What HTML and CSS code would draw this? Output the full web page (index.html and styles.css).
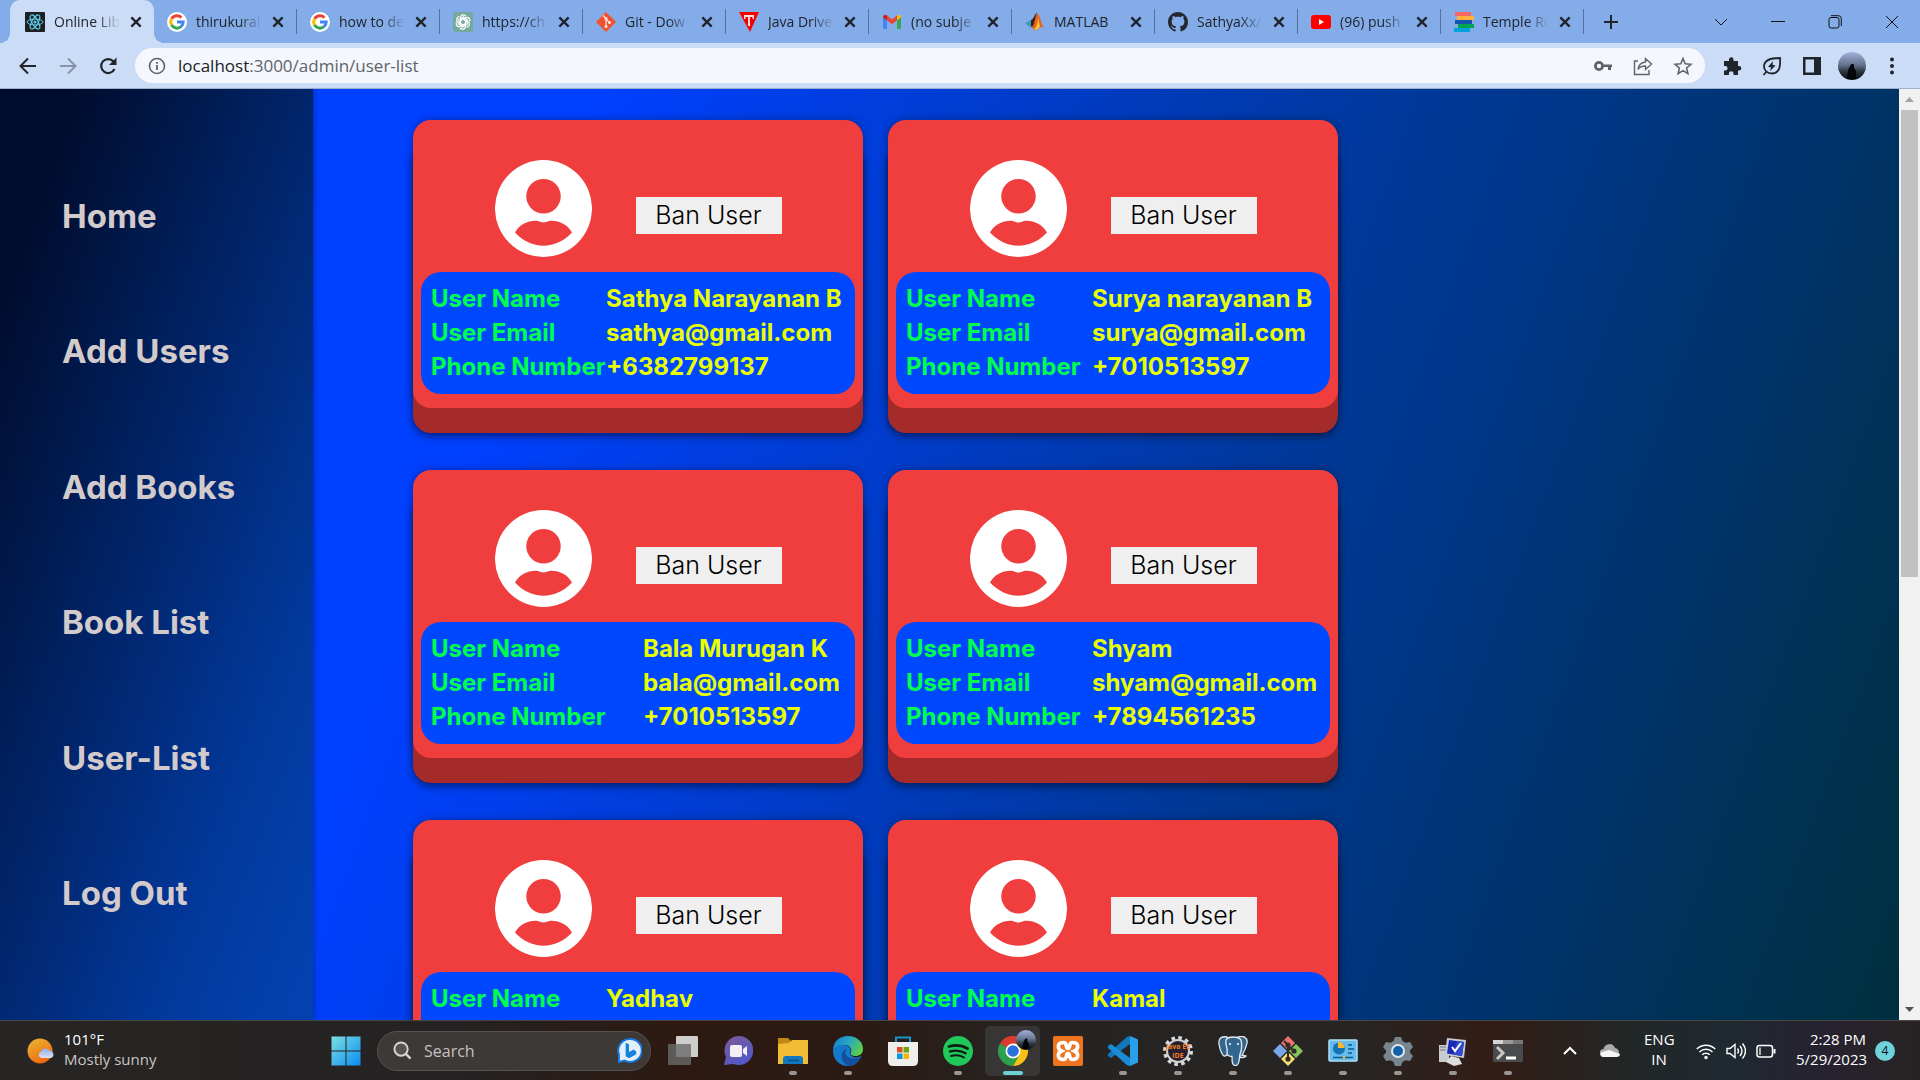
FILE: index.html
```
<!DOCTYPE html>
<html lang="en">
<head>
<meta charset="utf-8">
<title>Online Library</title>
<link rel="stylesheet" href="styles.css">
</head>
<body>
<svg class="defs" aria-hidden="true">
  <defs>
    <linearGradient id="g-win" x1="0" y1="0" x2="1" y2="1"><stop offset="0" stop-color="#7be0e2"/><stop offset="1" stop-color="#0a8cf0"/></linearGradient>
    <linearGradient id="g-sun" x1="0" y1="0" x2="0.5" y2="1"><stop offset="0" stop-color="#e8bb35"/><stop offset="1" stop-color="#f06a10"/></linearGradient>
    <linearGradient id="g-cloud" x1="0" y1="0" x2="0" y2="1"><stop offset="0" stop-color="#8fb0ea"/><stop offset="1" stop-color="#d8e2f4"/></linearGradient>
    <linearGradient id="g-photo" x1="0" y1="0" x2="0" y2="1"><stop offset="0" stop-color="#a4b0e0"/><stop offset="0.45" stop-color="#66758f"/><stop offset="0.7" stop-color="#2c343e"/><stop offset="1" stop-color="#0a0c12"/></linearGradient>
    <linearGradient id="g-chat" x1="0" y1="0" x2="0.6" y2="1"><stop offset="0" stop-color="#7d5a98"/><stop offset="1" stop-color="#5258c8"/></linearGradient>
    <linearGradient id="g-edge" x1="0" y1="0.2" x2="1" y2="0.6"><stop offset="0" stop-color="#1683d0"/><stop offset="0.5" stop-color="#28a8c0"/><stop offset="1" stop-color="#5cd044"/></linearGradient>
    <symbol id="i-close" viewBox="0 0 12 12"><path d="M2 2l8 8M10 2l-8 8" stroke="#20242b" stroke-width="2"/></symbol>
    <symbol id="i-google" viewBox="0 0 20 20"><circle cx="10" cy="10" r="10" fill="#fff"/><g fill="none" stroke-width="3"><path d="M4.600 6.800A6.200 6.200 0 0 1 14.400 5.600" stroke="#ea4335"/><path d="M4.700 13.200A6.200 6.200 0 0 1 4.700 6.700" stroke="#fbbc05"/><path d="M14 14.700A6.200 6.200 0 0 1 4.600 13" stroke="#34a853"/><path d="M10 10H16.200A6.200 6.200 0 0 1 13.900 14.800" stroke="#4285f4"/></g></symbol>
    <symbol id="i-user" viewBox="0 0 97 97"><path fill="#fff" fill-rule="evenodd" d="M48.500 0a48.500 48.500 0 1 1 0 97a48.500 48.500 0 1 1 0-97zM48.500 19a17.200 17.200 0 1 0 0 34.500a17.200 17.200 0 1 0 0-34.500zM20 72.500C25 64 34 60 43 61C46.500 62.900 50.500 62.900 54 61C63 60 72 64 77 72.500C69 81 59 85.700 48.500 85.700C38 85.700 28 81 20 72.500z"/></symbol>
    <symbol id="i-photo" viewBox="0 0 28 28"><circle cx="14" cy="14" r="14" fill="url(#g-photo)"/><path d="M9 27l1-9 2-4q2-4 4-1l0 3 2 3v8z" fill="#05060c"/></symbol>
  </defs>
</svg>

<header class="browser">
  <div class="tabstrip">
    <nav class="tabs" aria-label="Tabs">
      <div class="tab tab-active"><svg class="favicon" viewBox="0 0 20 20"><rect width="20" height="20" rx="1" fill="#1d1f23"/><g fill="none" stroke="#5fd0ee" stroke-width="1"><ellipse cx="10" cy="10" rx="8" ry="3"/><ellipse cx="10" cy="10" rx="8" ry="3" transform="rotate(60 10 10)"/><ellipse cx="10" cy="10" rx="8" ry="3" transform="rotate(120 10 10)"/></g><circle cx="10" cy="10" r="1.500" fill="#5fd0ee"/></svg><span class="tab-title">Online Lib</span><button class="tab-close" aria-label="Close tab"><svg><use href="#i-close"/></svg></button></div>
      <div class="tab"><svg class="favicon"><use href="#i-google"/></svg><span class="tab-title">thirukural</span><button class="tab-close" aria-label="Close tab"><svg><use href="#i-close"/></svg></button></div>
      <div class="tab"><svg class="favicon"><use href="#i-google"/></svg><span class="tab-title">how to de</span><button class="tab-close" aria-label="Close tab"><svg><use href="#i-close"/></svg></button></div>
      <div class="tab"><svg class="favicon" viewBox="0 0 20 20"><rect width="20" height="20" rx="3" fill="#75a99c"/><g fill="none" stroke="#fff" stroke-width="1.200"><path id="petal" d="M7.500 10V5.500a3 3 0 0 1 5.500-1.300M7.500 8.500l4-2.300 3.800 2.200"/><use href="#petal" transform="rotate(60 10 10)"/><use href="#petal" transform="rotate(120 10 10)"/><use href="#petal" transform="rotate(180 10 10)"/><use href="#petal" transform="rotate(240 10 10)"/><use href="#petal" transform="rotate(300 10 10)"/></g></svg><span class="tab-title">https://ch</span><button class="tab-close" aria-label="Close tab"><svg><use href="#i-close"/></svg></button></div>
      <div class="tab"><svg class="favicon" viewBox="0 0 20 20"><path d="M10 0l10 10-10 10L0 10z" fill="#f4502f"/><path d="M7 3.500l3 3V14.500M10 7l3.500 3.500" stroke="#fbe4dc" stroke-width="1.300" fill="none"/><g fill="#fbe4dc"><circle cx="10" cy="6.500" r="1.500"/><circle cx="10" cy="14.500" r="1.500"/><circle cx="13.500" cy="10.500" r="1.500"/></g></svg><span class="tab-title">Git - Dow</span><button class="tab-close" aria-label="Close tab"><svg><use href="#i-close"/></svg></button></div>
      <div class="tab"><svg class="favicon" viewBox="0 0 20 20"><path d="M0 0h20l-9 20z" fill="#f80000"/><path d="M5 3h10v4h-1.500V5H11v9H9V5H6.500v2H5z" fill="#fcdada"/></svg><span class="tab-title">Java Drive</span><button class="tab-close" aria-label="Close tab"><svg><use href="#i-close"/></svg></button></div>
      <div class="tab"><svg class="favicon" viewBox="0 0 20 20"><path d="M1 5v12h4V8z" fill="#4285f4"/><path d="M19 5v12h-4V8z" fill="#34a853"/><path d="M1 5.500C1 2.800 4 2.500 5 3.500l5 4 5-4v4.700l-5 4-5-4z" fill="#ea4335"/><path d="M1 5.500C1 3 3.500 2.500 5 3.500v4.700l-4-3z" fill="#c5221f"/><path d="M19 5.500C19 3 16.500 2.500 15 3.500v4.700l4-3z" fill="#fbbc04"/></svg><span class="tab-title">(no subje</span><button class="tab-close" aria-label="Close tab"><svg><use href="#i-close"/></svg></button></div>
      <div class="tab"><svg class="favicon" viewBox="0 0 20 20"><path d="M0 11l6-3 3 5-3 3z" fill="#3f9db8"/><path d="M6 8c3-1 4-7 6-7l-3 15-3-2z" fill="#3a2024"/><path d="M12 1c3 2 4 11 7 15-4-3-6 1-9 3l-3-4C10 12 10 4 12 1z" fill="#e8601c"/><path d="M12.500 3c1 4 0 11-3 14l1 1.500c2-2 4-3 4.500-4z" fill="#fbc63a"/></svg><span class="tab-title tab-title-short">MATLAB</span><button class="tab-close" aria-label="Close tab"><svg><use href="#i-close"/></svg></button></div>
      <div class="tab"><svg class="favicon" viewBox="0 0 16 16"><path fill="#24292f" d="M8 0C3.580 0 0 3.580 0 8c0 3.540 2.290 6.530 5.470 7.590.4.070.550-.170.550-.380 0-.190-.010-.820-.010-1.490-2.010.370-2.530-.490-2.690-.940-.090-.230-.480-.940-.820-1.130-.280-.150-.680-.520-.010-.530.630-.010 1.080.580 1.230.820.720 1.210 1.870.870 2.330.660.070-.520.280-.870.510-1.070-1.780-.2-3.640-.890-3.640-3.950 0-.870.310-1.590.820-2.150-.080-.2-.360-1.020.080-2.120 0 0 .670-.210 2.200.820.640-.180 1.320-.270 2-.270s1.360.090 2 .270c1.530-1.040 2.200-.820 2.200-.820.440 1.100.160 1.920.080 2.120.510.560.820 1.270.820 2.150 0 3.070-1.870 3.750-3.650 3.950.290.250.540.730.540 1.480 0 1.070-.010 1.930-.010 2.200 0 .210.150.460.550.380A8.010 8.010 0 0 0 16 8c0-4.420-3.580-8-8-8z"/></svg><span class="tab-title">SathyaXx/</span><button class="tab-close" aria-label="Close tab"><svg><use href="#i-close"/></svg></button></div>
      <div class="tab"><svg class="favicon" viewBox="0 0 20 20"><rect y="3" width="20" height="14" rx="3" fill="#f00"/><path d="M8 7l5 3-5 3z" fill="#fff"/></svg><span class="tab-title">(96) push</span><button class="tab-close" aria-label="Close tab"><svg><use href="#i-close"/></svg></button></div>
      <div class="tab"><svg class="favicon" viewBox="0 0 20 20"><path d="M1 0h16v4H1z" fill="#f96464"/><path d="M3 4h17v4H3z" fill="#fbb13c"/><path d="M1 8h17v4H1z" fill="#1555b0"/><path d="M4 12h16v4H4z" fill="#00a651"/><path d="M0 16h16v4H0z" fill="#00a3dc"/></svg><span class="tab-title">Temple Ru</span><button class="tab-close" aria-label="Close tab"><svg><use href="#i-close"/></svg></button></div>
    </nav>
    <button class="new-tab" aria-label="New tab"><svg viewBox="0 0 16 16"><path d="M8 1v14M1 8h14" stroke="#20242b" stroke-width="2"/></svg></button>
    <div class="window-controls">
      <button aria-label="Search tabs"><svg viewBox="0 0 14 14"><path d="M1 4l6 6 6-6"/></svg></button>
      <button aria-label="Minimize"><svg viewBox="0 0 14 14"><path d="M0 6.500h14"/></svg></button>
      <button aria-label="Restore"><svg viewBox="0 0 14 14"><rect x="1" y="2.500" width="10" height="10.500" rx="2"/><path d="M3 .7h7.500q2.800 0 2.800 2.800V11"/></svg></button>
      <button aria-label="Close"><svg viewBox="0 0 14 14"><path d="M1 1l12 12M13 1L1 13"/></svg></button>
    </div>
  </div>
  <div class="toolbar">
    <button class="tool" aria-label="Back"><svg viewBox="0 0 20 20"><path d="M18 10H3M10 2.500L2.500 10l7.500 7.500" fill="none" stroke="#20242b" stroke-width="2"/></svg></button>
    <button class="tool" aria-label="Forward"><svg viewBox="0 0 20 20"><path d="M2 10h15M10 2.500l7.500 7.500-7.500 7.500" fill="none" stroke="#8a93a5" stroke-width="2"/></svg></button>
    <button class="tool" aria-label="Reload"><svg viewBox="0 0 20 20"><path d="M16.500 13A7 7 0 1 1 15.500 5.500" fill="none" stroke="#20242b" stroke-width="2.200"/><path d="M18.500 1.500V9H11z" fill="#20242b"/></svg></button>
    <div class="omnibox">
      <svg class="tool-icon" viewBox="0 0 20 20"><circle cx="10" cy="10" r="7.500" fill="none" stroke="#5f6368" stroke-width="1.600"/><path d="M10 9v5M10 6v1.800" stroke="#5f6368" stroke-width="1.800"/></svg>
      <a class="url" href="#top"><span>localhost</span>:3000/admin/user-list</a>
      <button class="omni-btn" aria-label="Passwords"><svg viewBox="0 0 20 20"><circle cx="6" cy="10" r="3.600" fill="none" stroke="#5f6368" stroke-width="2.800"/><path d="M10 8.500h9V11h-1v3h-3v-3h-5z" fill="#5f6368"/></svg></button>
      <button class="omni-btn" aria-label="Share"><svg viewBox="0 0 20 20"><g fill="none" stroke="#5f6368" stroke-width="1.400"><path d="M5 5H1.500v13.500H16V14"/><path d="M5 13.500C5.500 9 8 6.500 12.500 6V2.500L18.500 8l-6 5.500V10C9 10 6.500 11 5 13.500z"/></g></svg></button>
      <button class="omni-btn" aria-label="Bookmark"><svg viewBox="0 0 20 20"><path d="M10 2.500l2.200 5.300 5.700.5-4.300 3.700 1.300 5.600L10 14.600l-4.900 3 1.300-5.600L2.100 8.300l5.700-.5z" fill="none" stroke="#5f6368" stroke-width="1.600"/></svg></button>
    </div>
    <button class="tool" aria-label="Extensions"><svg viewBox="0 0 20 20"><path d="M2 5h5V3.500a2.200 2.200 0 0 1 4.500 0V5H16v5h1a2.300 2.300 0 0 1 0 4.600h-1V19h-4.500v-1.500a2.300 2.300 0 0 0-4.600 0V19H2v-4.500h1.300a2.300 2.300 0 0 0 0-4.600H2z" fill="#20242b"/></svg></button>
    <button class="tool" aria-label="Energy saver"><svg viewBox="0 0 20 20"><path d="M18 2c.5 8 0 15-8 15.500C5 17.500 2 14 2 10.500 2 4 8 2 18 2zM5 15l-3.500 4" fill="none" stroke="#20242b" stroke-width="1.800"/><path d="M11 5l-5 6 3 .3L8 15l5.500-5.500-3-.7z" fill="#20242b"/></svg></button>
    <button class="tool" aria-label="Side panel"><svg viewBox="0 0 20 20"><path d="M1 1h18v18H1zM3.500 3.500v13H12v-13z" fill="#20242b" fill-rule="evenodd"/></svg></button>
    <button class="tool" aria-label="Profile"><svg class="profile"><use href="#i-photo"/></svg></button>
    <button class="tool" aria-label="Menu"><svg viewBox="0 0 20 20"><g fill="#20242b"><circle cx="10" cy="3.500" r="2"/><circle cx="10" cy="10" r="2"/><circle cx="10" cy="16.500" r="2"/></g></svg></button>
  </div>
</header>

<div class="viewport" id="top">
  <nav class="sidebar">
    <a href="#home">Home</a>
    <a href="#add-users">Add Users</a>
    <a href="#add-books">Add Books</a>
    <a href="#book-list">Book List</a>
    <a href="#user-list">User-List</a>
    <a href="#logout">Log Out</a>
  </nav>
  <main class="content">
    <div class="cards">
      <article class="card">
        <div class="card-head"><svg class="avatar"><use href="#i-user"/></svg><button class="ban">Ban User</button></div>
        <table class="details values-lg"><tr><th>User Name</th><td>Sathya Narayanan B</td></tr><tr><th>User Email</th><td>sathya@gmail.com</td></tr><tr><th>Phone Number</th><td>+6382799137</td></tr></table>
      </article>
      <article class="card">
        <div class="card-head"><svg class="avatar"><use href="#i-user"/></svg><button class="ban">Ban User</button></div>
        <table class="details"><tr><th>User Name</th><td>Surya narayanan B</td></tr><tr><th>User Email</th><td>surya@gmail.com</td></tr><tr><th>Phone Number</th><td>+7010513597</td></tr></table>
      </article>
      <article class="card">
        <div class="card-head"><svg class="avatar"><use href="#i-user"/></svg><button class="ban">Ban User</button></div>
        <table class="details values-sm"><tr><th>User Name</th><td>Bala Murugan K</td></tr><tr><th>User Email</th><td>bala@gmail.com</td></tr><tr><th>Phone Number</th><td>+7010513597</td></tr></table>
      </article>
      <article class="card">
        <div class="card-head"><svg class="avatar"><use href="#i-user"/></svg><button class="ban">Ban User</button></div>
        <table class="details"><tr><th>User Name</th><td>Shyam</td></tr><tr><th>User Email</th><td>shyam@gmail.com</td></tr><tr><th>Phone Number</th><td>+7894561235</td></tr></table>
      </article>
      <article class="card">
        <div class="card-head"><svg class="avatar"><use href="#i-user"/></svg><button class="ban">Ban User</button></div>
        <table class="details values-lg"><tr><th>User Name</th><td>Yadhav</td></tr><tr><th>User Email</th><td>yadhav@gmail.com</td></tr><tr><th>Phone Number</th><td>+7010513597</td></tr></table>
      </article>
      <article class="card">
        <div class="card-head"><svg class="avatar"><use href="#i-user"/></svg><button class="ban">Ban User</button></div>
        <table class="details"><tr><th>User Name</th><td>Kamal</td></tr><tr><th>User Email</th><td>kamal@gmail.com</td></tr><tr><th>Phone Number</th><td>+7010513597</td></tr></table>
      </article>
    </div>
  </main>
  <div class="scrollbar" aria-hidden="true">
    <svg viewBox="0 0 21 21"><path d="M6 13l4.500-5 4.500 5z" fill="#a3a3a3"/></svg>
    <div class="track"><div class="thumb"></div></div>
    <svg viewBox="0 0 21 21"><path d="M6 8l4.500 5L15 8z" fill="#505050"/></svg>
  </div>
</div>

<footer class="taskbar">
  <div class="weather">
    <svg viewBox="0 0 28 28"><circle cx="13" cy="14" r="12.500" fill="url(#g-sun)"/><path d="M14 21a3.500 3.500 0 0 1 0-6.500 5 5 0 0 1 9-.5 3.600 3.600 0 0 1 1 7z" fill="url(#g-cloud)"/></svg>
    <p><span>101°F</span><br>Mostly sunny</p>
  </div>
  <div class="apps">
    <button class="app" aria-label="Start"><svg viewBox="0 0 30 30"><path d="M.5 .5h14v14H.5zM15.500 .5h14v14h-14zM.5 15.500h14v14H.5zM15.500 15.500h14v14h-14z" fill="url(#g-win)"/></svg></button>
    <label class="search">
      <svg viewBox="0 0 20 20"><circle cx="8.500" cy="8.500" r="7" fill="#ffffff22" stroke="#d8d6d5" stroke-width="2"/><path d="M13.500 13.500l5 5" stroke="#d8d6d5" stroke-width="2.400"/></svg>
      <input type="text" placeholder="Search" aria-label="Search">
      <svg class="bing" viewBox="0 0 26 26"><path d="M13 1a12 12 0 1 1-5 22.500L2 25V17A12 12 0 0 1 13 1z" fill="#e4effc" stroke="#1878e0" stroke-width="2"/><path d="M9 5l3.500 1.500v8l5-2.500 2.500 2v3L12.500 21 9 19z" fill="#1483dc"/></svg>
    </label>
    <button class="app" aria-label="Task view"><svg viewBox="0 0 30 30"><rect x="8" y="0" width="22" height="21" rx="1" fill="#cfcecd"/><rect x="0" y="8" width="23" height="21" rx="1" fill="#6a6a6acc"/></svg></button>
    <button class="app" aria-label="Chat"><svg viewBox="0 0 30 30"><path d="M15.500 0a14.500 14.500 0 1 1-5 28L1 29l2-8A14.500 14.500 0 0 1 15.500 0z" fill="url(#g-chat)"/><rect x="7" y="9" width="12" height="12" rx="2" fill="#f2f0f5"/><path d="M20 13l4-3v10l-4-3z" fill="#f2f0f5"/></svg></button>
    <button class="app running" aria-label="File Explorer"><svg viewBox="0 0 30 30"><path d="M0 2h10l3 3h17v5H0z" fill="#c08a10"/><path d="M0 8l11-1 3-3h16v24H0z" fill="#f0bd35"/><path d="M5 28v-5q0-3 3-3h14q3 0 3 3v5z" fill="#1078bc"/><path d="M10 24.500h11" stroke="#084f84" stroke-width="1.500"/></svg></button>
    <button class="app running" aria-label="Edge"><svg viewBox="0 0 30 30"><path d="M0 15C0 5 7 0 15 0c9 0 15 6 15 13 0 5-4 7-7 7-4 0-6-1-5-4 1-4-2-7-6-7C6 9 2 11 0 15z" fill="url(#g-edge)"/><path d="M0 15C2 10 6 8.500 11 9c4 0 7 3 6.500 6-.8 3 0 5 3 6 4 1 7-1 8-1-3 7-9 10-14 10C6 30 0 23 0 15z" fill="#1479ca"/><path d="M11 14c-5 5-2 14 5 16 6 0 10-4 12.500-10-6 4-15 3-16-3-.2-2 0-3 1-4-1 0-2 .500-2.500 1z" fill="#1550a0"/></svg></button>
    <button class="app" aria-label="Store"><svg viewBox="0 0 30 30"><path d="M8 7V1.500h14V7" fill="none" stroke="#1893cc" stroke-width="2"/><path d="M0 6h30v19q0 5-5 5H5q-5 0-5-5z" fill="#eeeeed"/><path d="M9 11h5.500v5.500H9z" fill="#e04c24"/><path d="M15.500 11H21v5.500h-5.500z" fill="#68a80c"/><path d="M9 17.500h5.500V23H9z" fill="#0a98dc"/><path d="M15.500 17.500H21V23h-5.500z" fill="#f4b40c"/></svg></button>
    <button class="app running" aria-label="Spotify"><svg viewBox="0 0 30 30"><circle cx="15" cy="15" r="15" fill="#1ec95a"/><g fill="none" stroke="#101b14" stroke-linecap="round"><path d="M6 10.500q10-3 18.500 2" stroke-width="2.800"/><path d="M7 15.500q8.500-2.500 15.500 1.800" stroke-width="2.400"/><path d="M8 20q7-2 13 1.500" stroke-width="2"/></g></svg></button>
    <button class="app running focused" aria-label="Chrome"><svg viewBox="0 0 30 30"><path d="M15 15L2 7.500A15 15 0 0 1 28 7.500H15z" fill="#dc3a30"/><path d="M15 15L2 7.500A15 15 0 0 0 15 30l6.500-11.200z" fill="#2ca04c"/><path d="M15 7.500h13A15 15 0 0 1 15 30l6.500-11.200z" fill="#fbc116"/><circle cx="15" cy="15" r="7.500" fill="#fff"/><circle cx="15" cy="15" r="5.800" fill="#2a70dc"/></svg><svg class="app-profile" viewBox="0 0 28 28"><use href="#i-photo"/></svg></button>
    <button class="app" aria-label="XAMPP"><svg viewBox="0 0 30 30"><rect width="30" height="30" rx="2" fill="#ee7420"/><path d="M10.500 6.500C4 6.500 4 13 8.500 15C4 17 4 23.500 10.500 23.500C15 23.500 12 17.500 15 17.500S15 23.500 19.500 23.500C26 23.500 26 17 21.500 15C26 13 26 6.500 19.500 6.500C15 6.500 18 12.500 15 12.500S15 6.500 10.500 6.500z" fill="none" stroke="#fff" stroke-width="3.600"/></svg></button>
    <button class="app running" aria-label="Visual Studio Code"><svg viewBox="0 0 30 30"><path d="M22 0l8 3.500v23L22 30z" fill="#28a0ea"/><path d="M22 0v8L3 22l-3-2v-2L19 .800z" fill="#1278bc"/><path d="M22 30v-8L3 8l-3 2v2l19 17.200z" fill="#1b8bd4"/></svg></button>
    <button class="app running" aria-label="Eclipse"><svg viewBox="0 0 30 30"><circle cx="15" cy="15" r="13" fill="none" stroke="#d8d8d8" stroke-width="4" stroke-dasharray="3.500 3.300"/><circle cx="15" cy="15" r="11" fill="#282030" stroke="#d0d0d0" stroke-width="2"/><text x="15" y="13" class="ee">Java EE</text><text x="15" y="22" class="ee">IDE</text></svg></button>
    <button class="app running" aria-label="PostgreSQL"><svg viewBox="0 0 30 30"><g fill="#33668f" stroke="#e4eaf0" stroke-width="1.300"><path d="M9 1C4 0 0 2 1 8c1 7 4 13 6 12 2 0 3-3 4-4z"/><path d="M20 1c5-2 10 1 9 6-1 6-3 9-5 12l4 1c-2 2-5 2-6 1z"/><path d="M8 4c2-4 12-4 15 0 1 5 1 10-1 14-1 4 0 11-4 11.500-4 .500-4-4-4-9-3 0-5-1-5-4 1-5-2-7-1-12.500z"/></g><circle cx="12" cy="8" r="1" fill="#fff"/><circle cx="20" cy="8" r="1" fill="#fff"/></svg></button>
    <button class="app running" aria-label="Git Bash"><svg viewBox="0 0 30 30"><path d="M15 0l7 7-7 7-7-7z" fill="#ec7468"/><path d="M7 8l7 7-7 7-7-7z" fill="#78a8ec"/><path d="M23 8l7 7-7 7-7-7z" fill="#84c45c"/><path d="M15 16l7 7-7 7-7-7z" fill="#f4dc70"/><path d="M11 5l4 4v14M15 10l6 5" stroke="#302c2a" stroke-width="2" fill="none"/><g fill="#302c2a"><circle cx="15" cy="9" r="2.600"/><circle cx="15" cy="23" r="2.600"/><circle cx="21" cy="15" r="2.600"/></g></svg></button>
    <button class="app running" aria-label="Control Panel"><svg viewBox="0 0 30 30"><rect x="1" y="4" width="28" height="21" rx="1" fill="#65bbec" stroke="#b0e0f8" stroke-width="1.500"/><circle cx="11" cy="12.500" r="6" fill="#1574b4"/><path d="M10 12V5.500a6.500 6.500 0 0 1 6.500 6.500z" fill="#f8b830"/><path d="M20 9h4M20 13h6M20 17h4M5 21.500h20" stroke="#0c5c98" stroke-width="1.500"/><path d="M15 20h2v3h-2z" fill="#f8b830"/></svg></button>
    <button class="app running" aria-label="Settings"><svg viewBox="0 0 30 30"><path d="M12 1h6l1.500 4 3 1.800 4.500-.8 3 5-3 3.500v2l3 3.500-3 5-4.500-.8-3 1.800-1.500 4h-6l-1.500-4-3-1.800L3 25l-3-5 3-3.500v-2L0 11l3-5 4.500.800 3-1.800z" fill="#78848e"/><circle cx="15" cy="15" r="7" fill="#dce6ee"/><circle cx="15" cy="15" r="5" fill="#1460a8"/></svg></button>
    <button class="app running" aria-label="Remote Desktop"><svg viewBox="0 0 30 30"><path d="M1 9h10v17H1z" fill="#c8ccd0"/><path d="M2 11h7M2 14h7" stroke="#707478"/><path d="M13 20l8 2 3 6-8 2-8-4z" fill="#dcdee0"/><path d="M9 2l19 2-2 18-19-3z" fill="#c8ccd0"/><path d="M11 4l15 2-2 14-15-2.500z" fill="#1828b8"/><path d="M19 5l7 1-2 14-9-1.500z" fill="#3048cc"/><path d="M14 11l3 4 6-8" fill="none" stroke="#fff" stroke-width="2"/></svg></button>
    <button class="app running" aria-label="Terminal"><svg viewBox="0 0 30 30"><rect y="4" width="30" height="22" rx="1" fill="#4a4b4c"/><path d="M0 4h10v4H0z" fill="#d4d4d4"/><path d="M10 4h10v4H10z" fill="#999"/><path d="M20 4h10v4H20z" fill="#777"/><path d="M4 11l6 6-6 6" fill="none" stroke="#c8c8c8" stroke-width="3"/><path d="M13 22h10" stroke="#fff" stroke-width="3"/></svg></button>
  </div>
  <div class="tray">
    <button aria-label="Hidden icons"><svg viewBox="0 0 20 20"><path d="M4 13l6-6 6 6" fill="none" stroke="#fff" stroke-width="2"/></svg></button>
    <svg class="cloud" viewBox="0 0 20 20"><path d="M4 16a4 4 0 0 1-.5-8 6 6 0 0 1 11.500-1 4.800 4.800 0 0 1 1.500 9z" fill="#aaa"/><path d="M3 16c-3-1-3-4-1-5l7-2 11 4c0 2-1.500 3-3.500 3z" fill="#f4f4f4"/></svg>
    <p class="lang">ENG<br>IN</p>
    <button class="status" aria-label="Network, volume, battery">
      <svg viewBox="0 0 20 20"><g fill="none" stroke="#fff" stroke-width="1.500"><path d="M.8 8a13 13 0 0 1 18.400 0M3.500 11a9.200 9.200 0 0 1 13 0M6.200 13.800a5.400 5.400 0 0 1 7.600 0"/></g><circle cx="10" cy="16.500" r="1.700" fill="#fff"/></svg>
      <svg viewBox="0 0 20 20"><g fill="none" stroke="#fff" stroke-width="1.400"><path d="M1 7.500h3L9 3.500v13L4 12.500H1z"/><path d="M11.500 7.500q2 2.500 0 5M14 5q4 5 0 10M16.500 2.500q6 7.500 0 15"/></g></svg>
      <svg viewBox="0 0 20 20"><rect x="1" y="4.500" width="15.500" height="11.500" rx="2.500" fill="none" stroke="#fff" stroke-width="1.500"/><path d="M3 6.500h2v7.500H3z" fill="#aaa"/><path d="M17.500 8h2v4.500h-2z" fill="#fff"/></svg>
    </button>
    <p class="clock">2:28 PM<br>5/29/2023</p>
    <span class="badge">4</span>
  </div>
</footer>
</body>
</html>
```
FILE: styles.css
```
* {
  box-sizing: border-box;
}

body {
  margin: 0;
  height: 100vh;
  display: flex;
  flex-direction: column;
  overflow: hidden;
  font-family: "Open Sans", "Noto Sans", sans-serif;
}

button {
  border: 0;
  padding: 0;
  background: none;
  font: inherit;
  color: inherit;
}

svg {
  display: block;
  flex: none;
}

p {
  margin: 0;
}

.defs {
  position: absolute;
  width: 0;
  height: 0;
}

/* Browser frame */
.browser {
  background: #cbdcf6;
  border-bottom: 1px solid #9fb0cc;
}

.tabstrip {
  display: flex;
  align-items: center;
  height: 43px;
  padding-left: 13px;
  background: #84ace9;
}

.tabs {
  display: flex;
  flex: 0 1 1571px;
  min-width: 0;
  height: 43px;
  align-items: center;
}

.tab {
  display: flex;
  flex: 1 1 0;
  min-width: 0;
  align-items: center;
  height: 25px;
  padding: 0 11px 0 13px;
  gap: 9px;
  border-right: 1px solid #56709d;
}

.tab-active {
  position: relative;
  height: 43px;
  margin-left: -3px;
  padding-left: 15px;
  border-right: 0;
  background: #cbdcf6;
  border-radius: 10px 10px 0 0;
}

/* Curved feet where the active tab meets the toolbar */
.tab-active::before,
.tab-active::after {
  content: "";
  position: absolute;
  bottom: 0;
  width: 10px;
  height: 10px;
}

.tab-active::before {
  right: 100%;
  background: radial-gradient(circle at 0 0, transparent 10px, #cbdcf6 10px);
}

.tab-active::after {
  left: 100%;
  background: radial-gradient(circle at 100% 0, transparent 10px, #cbdcf6 10px);
}

.favicon {
  width: 20px;
  height: 20px;
}

.tab-title {
  flex: 1;
  min-width: 0;
  overflow: hidden;
  white-space: nowrap;
  font-size: 14px;
  line-height: 20px;
  color: #20242b;
  mask-image: linear-gradient(90deg, #000 65%, transparent);
}

.tab-title-short {
  mask-image: none;
}

.tab-close svg {
  width: 14px;
  height: 14px;
}

.new-tab {
  margin-left: 19px;
}

.new-tab svg {
  width: 16px;
  height: 16px;
}

.window-controls {
  display: flex;
  margin-left: auto;
  height: 36px;
}

.window-controls button {
  display: grid;
  place-items: center;
  width: 57px;
}

.window-controls svg {
  width: 14px;
  height: 14px;
  fill: none;
  stroke: #111;
}

.toolbar {
  display: flex;
  align-items: center;
  height: 45px;
  padding: 0 8px;
}

.tool {
  display: grid;
  place-items: center;
  width: 40px;
  height: 40px;
}

.tool svg {
  width: 20px;
  height: 20px;
}

.tool .profile {
  width: 28px;
  height: 28px;
}

.omnibox {
  display: flex;
  flex: 1;
  align-items: center;
  height: 35px;
  margin: 0 7px;
  padding: 0 12px;
  border-radius: 18px;
  background: #f4f7fd;
}

.tool-icon {
  width: 20px;
  height: 20px;
}

.url {
  flex: 1;
  margin-left: 11px;
  font-size: 17px;
  color: #5f6368;
  text-decoration: none;
}

.url span {
  color: #1b1d21;
}

.omni-btn {
  display: grid;
  place-items: center;
  width: 40px;
}

.omni-btn:last-child {
  width: 20px;
  margin-left: 10px;
}

.omni-btn svg {
  width: 20px;
  height: 20px;
}

/* Page */
.viewport {
  display: flex;
  flex: 1;
  min-height: 0;
  overflow: hidden;
  font-family: Inter, "Open Sans", sans-serif;
}

.sidebar {
  position: relative;
  z-index: 1;
  display: flex;
  flex-direction: column;
  flex: 0 0 313px;
  justify-content: space-between;
  padding: 103px 62px;
  background: linear-gradient(110deg, #000c2c 11%, #02389a 75%, #0341ae 95%);
  box-shadow: 0 0 6px #00000066;
}

.sidebar a {
  font-size: 33px;
  font-weight: 700;
  line-height: 48px;
  color: #d3cbcb;
  text-decoration: none;
  white-space: nowrap;
}

.content {
  flex: 1;
  min-width: 0;
  padding: 31px 100px;
  overflow: hidden;
  background: linear-gradient(110deg, #0040ff 15%, #0039a2 54%, #003474 75%, #003040 99%);
}

.cards {
  display: flex;
  flex-wrap: wrap;
  gap: 62px 25px;
  max-width: 925px;
}

.card {
  width: 450px;
  padding: 40px 8px 14px;
  border-radius: 18px;
  background: #f03e3e;
  box-shadow: 0 25px 0 #a52a2a, 0 28px 9px #00000088, 0 0 8px #00000055;
}

.card-head {
  display: flex;
  justify-content: center;
  align-items: flex-start;
  gap: 44px;
  height: 112px;
}

.avatar {
  width: 97px;
  height: 97px;
}

.ban {
  width: 146px;
  height: 37px;
  margin-top: 37px;
  background: #efefef;
  font-size: 25px;
  font-weight: 300;
  line-height: 37px;
  color: #000;
}

.details {
  width: 100%;
  padding: 10px;
  border-spacing: 0;
  border-radius: 20px;
  background: #0048ff;
  font-size: 24px;
  font-weight: 700;
  line-height: 34px;
  color: #e8ff00;
  white-space: nowrap;
}

.details th,
.details td {
  padding: 0;
  text-align: left;
}

.details th {
  color: #00ff4c;
}

.details td {
  width: 228px;
}

.values-lg td {
  width: 239px;
}

.values-sm td {
  width: 202px;
}

.scrollbar {
  display: flex;
  flex-direction: column;
  flex: 0 0 21px;
  background: #f1f1f1;
}

.scrollbar svg {
  width: 21px;
  height: 21px;
}

.track {
  flex: 1;
  padding: 0 2px;
}

.thumb {
  height: 52.5%;
  background: #c1c1c1;
}

/* Taskbar */
.taskbar {
  display: flex;
  flex: 0 0 60px;
  align-items: center;
  border-top: 1px solid #4a4644;
  background: linear-gradient(90deg, #282624 0, #242222 24%, #2d1912 35%, #2b1a14 45%, #262423 54%, #262524 70%, #331c15 78%, #232625 84%, #1f2930 90%, #272230 95%, #282322);
  color: #fff;
  font-size: 15px;
  line-height: 20px;
}

.taskbar p {
  padding-bottom: 3px;
}

.weather {
  display: flex;
  align-items: center;
  gap: 9px;
  flex: 0 0 318px;
  padding-left: 27px;
  color: #c8c6c5;
}

.weather span {
  color: #fff;
}

.weather svg {
  width: 28px;
  height: 28px;
}

.apps {
  display: flex;
  align-items: center;
}

.app {
  position: relative;
  display: grid;
  place-items: center;
  width: 55px;
  height: 50px;
}

.app svg {
  width: 30px;
  height: 30px;
}

.running::after {
  content: "";
  position: absolute;
  bottom: 1px;
  left: calc(50% - 4px);
  width: 8px;
  height: 4px;
  border-radius: 2px;
  background: #999594;
}

.focused {
  border-radius: 5px;
  background: #383635;
}

.focused::after {
  left: calc(50% - 10px);
  width: 20px;
  background: #6fcfd6;
}

.app .app-profile {
  position: absolute;
  top: 4px;
  right: 4px;
  width: 20px;
  height: 20px;
}

.ee {
  font-size: 7px;
  font-weight: 700;
  fill: #f08020;
  text-anchor: middle;
}

.search {
  display: flex;
  align-items: center;
  gap: 12px;
  width: 274px;
  height: 40px;
  margin: 0 4px;
  padding: 0 8px 0 15px;
  border: 1px solid #555250;
  border-radius: 20px;
  background: #3d3937;
}

.search svg {
  width: 19px;
  height: 19px;
}

.search .bing {
  width: 25px;
  height: 25px;
}

.search input {
  flex: 1;
  min-width: 0;
  border: 0;
  padding: 0;
  background: none;
  font: inherit;
  font-size: 16px;
  color: #fff;
}

.search input::placeholder {
  color: #c4c1bf;
}

.tray {
  display: flex;
  align-items: center;
  margin-left: auto;
  padding-right: 25px;
}

.tray button {
  width: 20px;
}

.tray svg {
  width: 20px;
  height: 20px;
}

.tray .cloud {
  margin: 0 24px 0 20px;
}

.lang {
  width: 30px;
  text-align: center;
}

.tray .status {
  display: flex;
  gap: 10px;
  width: 80px;
  margin: 0 20px 0 22px;
}

.clock {
  width: 70px;
  text-align: right;
  white-space: nowrap;
}

.badge {
  width: 20px;
  height: 20px;
  margin-left: 9px;
  border-radius: 50%;
  background: #6fd3dc;
  font-size: 12px;
  text-align: center;
  color: #111;
}
```
